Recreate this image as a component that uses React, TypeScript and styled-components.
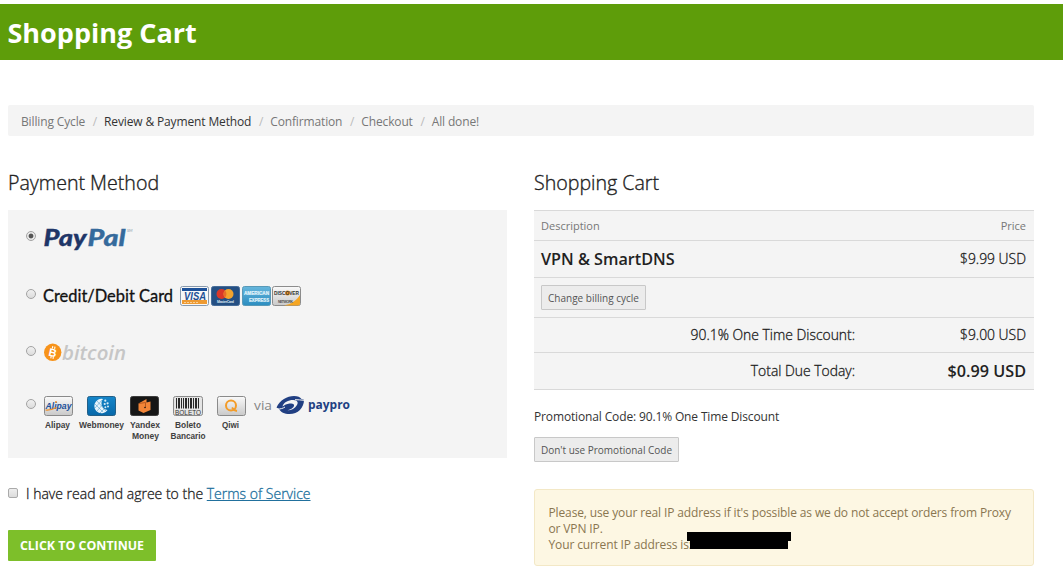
import React from "react";
import styled, { createGlobalStyle } from "styled-components";

const GlobalStyle = createGlobalStyle`
  * { box-sizing: border-box; }
  body {
    margin: 0;
    background: #fff;
    color: #222;
    font-family: "Open Sans", sans-serif;
    overflow: hidden;
  }
`;

const Page = styled.div`
  padding-top: 4px;
  height: 584px;
`;

const Header = styled.header`
  height: 56px;
  padding: 0 7.5px;
  background: #5e9d0a;
`;

const Title = styled.h1`
  margin: 0;
  color: #fff;
  font-size: 27px;
  font-weight: 700;
  line-height: 58px;
`;

const Content = styled.main`
  padding: 45px 29px 0 8px;
`;

const Breadcrumbs = styled.nav`
  display: flex;
  height: 31px;
  padding: 0 13px;
  border-radius: 2px;
  background: #f4f4f4;
  font-size: 12px;
  letter-spacing: -0.14px;
  line-height: 33px;
`;

const Crumb = styled.span<{ $active?: boolean }>`
  color: ${(p) => (p.$active ? "#333" : "#777")};

  &:not(:first-child)::before {
    content: "/";
    padding: 0 7px 0 7.7px;
    color: #bbb;
  }
`;

const Columns = styled.div`
  display: grid;
  grid-template-columns: 499px 500px;
  column-gap: 27px;
`;

const Column = styled.section`
  padding-top: 31px;
`;

const Heading = styled.h2`
  height: 43px;
  margin: 0;
  font-size: 19.6px;
  font-weight: 300;
  line-height: 32px;
  -webkit-text-stroke: 0.35px #222;
`;

const Methods = styled.div`
  display: flex;
  flex-direction: column;
  height: 248px;
  padding: 0 18px;
  background: #f4f4f4;
`;

const Method = styled.label<{ $height: number; $offset: number }>`
  display: flex;
  align-items: flex-start;
  gap: 8px;
  height: ${(p) => p.$height}px;
  padding-top: ${(p) => p.$offset}px;
`;

const Radio = styled.input<{ $top: number }>`
  appearance: none;
  flex: none;
  width: 10px;
  height: 10px;
  margin: ${(p) => p.$top}px 0 0;
  border: 1px solid #a3a3a3;
  border-radius: 50%;
  background: linear-gradient(#f0f0f0, #dcdcdc);

  &:checked {
    background: radial-gradient(circle, #555 0 2px, #e8e8e8 2.8px);
  }
`;

const Art = styled.svg`
  display: block;
  flex: none;
  overflow: visible;
`;

const Agreement = styled.label`
  display: flex;
  align-items: center;
  gap: 8px;
  height: 20px;
  margin-top: 25px;
  font-size: 14px;
  font-weight: 300;
  -webkit-text-stroke: 0.3px;
`;

const Checkbox = styled.input`
  appearance: none;
  width: 10px;
  height: 10px;
  margin: 0 0 1px;
  border: 1px solid #aaa;
  border-radius: 2px;
  background: linear-gradient(#eee, #dcdcdc);
`;

const TermsLink = styled.a`
  color: #21709d;
  text-decoration: underline;
`;

const Continue = styled.button`
  display: block;
  width: 148px;
  height: 31px;
  margin-top: 27px;
  padding: 0;
  border: 0;
  border-radius: 1px;
  background: #7dbf2a;
  color: #fff;
  font: 700 12.4px/31px "Open Sans", sans-serif;
  white-space: nowrap;
`;

const Cart = styled.div`
  border-top: 1px solid #d9d9d9;
  background: #f4f4f4;
`;

const CartRow = styled.div<{ $height: number }>`
  display: grid;
  grid-template-columns: 321px 1fr;
  align-items: center;
  height: ${(p) => p.$height}px;
  padding: 0 8px 0 7px;
  border-bottom: 1px solid #d9d9d9;
`;

const Cell = styled.span<{ $small?: boolean; $strong?: boolean }>`
  color: ${(p) => (p.$small ? "#777" : "#222")};
  font-size: ${(p) => (p.$small ? 11 : p.$strong ? 16.2 : 13.9)}px;
  font-weight: ${(p) => (p.$strong ? 600 : p.$small ? 400 : 300)};
  line-height: 20px;
  white-space: nowrap;
  ${(p) => (p.$small || p.$strong ? "" : "-webkit-text-stroke: 0.3px;")}
`;

const LabelCell = styled(Cell)`
  padding-right: 7px;
  text-align: right;
`;

const PriceCell = styled(Cell)`
  text-align: right;
`;

const SmallButton = styled.button<{ $width: number }>`
  display: block;
  width: ${(p) => p.$width}px;
  height: 25px;
  padding: 2px 0 0;
  border: 1px solid #c8c8c8;
  border-radius: 1px;
  background: #ececec;
  color: #555;
  font: 400 10px/21px "Open Sans", sans-serif;
  white-space: nowrap;
`;

const Promo = styled.p`
  margin: 17px 0 10px;
  color: #333;
  font-size: 12px;
  letter-spacing: -0.14px;
  line-height: 20px;
`;

const Notice = styled.div`
  height: 77px;
  margin-top: 27px;
  padding: 15px 13.5px;
  border: 1px solid #f3e8c6;
  border-radius: 3px;
  background: #fdf7e3;
  color: #8a7650;
  font-size: 12px;
  letter-spacing: -0.13px;
  line-height: 16px;
`;

const AddressLine = styled.div`
  position: relative;
`;

const Redaction = styled(Art)`
  position: absolute;
  left: 138.5px;
  top: -5px;
`;

const SANS = "Liberation Sans, sans-serif";

function PayPalLogo() {
  return (
    <Art width="90" height="26" fontFamily="Lato, sans-serif" fontSize="22.5" fontWeight="900" fontStyle="italic" strokeWidth="0.3">
      <text x="-0.5" y="17.5" fill="#1f3668" stroke="#1f3668" textLength="43" lengthAdjust="spacingAndGlyphs">Pay</text>
      <text x="43.5" y="17.5" fill="#356a9c" stroke="#356a9c" textLength="38" lengthAdjust="spacingAndGlyphs">Pal</text>
      <text x="83" y="4" fill="#8899aa" fontSize="4" fontWeight="400">SM</text>
    </Art>
  );
}

function CardLogos() {
  return (
    <Art width="258" height="22">
      <defs>
        <linearGradient id="silver" x1="0" y1="0" x2="0" y2="1">
          <stop offset="0" stopColor="#fafafa" />
          <stop offset="1" stopColor="#c9c9c9" />
        </linearGradient>
        <linearGradient id="amex" x1="0" y1="0" x2="0" y2="1">
          <stop offset="0" stopColor="#66b6dc" />
          <stop offset="1" stopColor="#2b8dc0" />
        </linearGradient>
      </defs>
      <text x="-1" y="16.5" fill="#111" fontFamily="Lato, sans-serif" fontSize="16.5" fontWeight="400" stroke="#111" strokeWidth="0.3" textLength="130" lengthAdjust="spacingAndGlyphs">Credit/Debit Card</text>

      <g transform="translate(136 1)">
        <rect x="0.5" y="0.5" width="28" height="19" rx="2" fill="#f7f7f7" stroke="#8799ad" />
        <path d="M2 2h25v3H2z" fill="#1d5199" />
        <path d="M2 14h25v4H2z" fill="#ee9a32" />
        <text x="4" y="13.5" fill="#1d4f95" fontFamily={SANS} fontSize="10" fontWeight="700" fontStyle="italic" textLength="22" lengthAdjust="spacingAndGlyphs">VISA</text>
        <path d="M4 16.5h15" stroke="#fff4dc" strokeDasharray="2 1" opacity="0.6" />
      </g>
      <g transform="translate(167 1)">
        <rect x="0.5" y="0.5" width="28" height="19" rx="2" fill="#244f83" stroke="#456b98" />
        <circle cx="10.5" cy="8" r="5" fill="#d83729" />
        <circle cx="17.5" cy="8" r="5" fill="#f3a32e" />
        <path d="M14 4.5a5 5 0 0 1 0 7a5 5 0 0 1 0-7z" fill="#e76c29" />
        <text x="6" y="17" fill="#dce7f3" fontFamily={SANS} fontSize="3.5" fontWeight="700" textLength="17">MasterCard</text>
      </g>
      <g transform="translate(198 1)">
        <rect x="0.5" y="0.5" width="28" height="19" rx="2" fill="url(#amex)" stroke="#5899b7" />
        <g fill="#e2f4fb" stroke="#e2f4fb" strokeWidth="0.2" fontFamily={SANS} fontSize="4.8" fontWeight="700">
          <text x="2" y="8.5" textLength="25" lengthAdjust="spacingAndGlyphs">AMERICAN</text>
          <text x="7" y="15.5" textLength="20" lengthAdjust="spacingAndGlyphs">EXPRESS</text>
        </g>
      </g>
      <g transform="translate(228 1)">
        <rect x="0.5" y="0.5" width="28" height="19" rx="2" fill="url(#silver)" stroke="#8c8c8c" />
        <path d="M28 9v8.5a2 2 0 0 1-2 2H12C20 18 25 14 28 9z" fill="#f5a623" />
        <circle cx="15.5" cy="7" r="2.5" fill="#ef9422" />
        <text x="2" y="9" fill="#333" fontFamily={SANS} fontSize="5" fontWeight="700" textLength="25" lengthAdjust="spacingAndGlyphs">DISCOVER</text>
        <text x="6" y="16.5" fill="#555" fontFamily={SANS} fontSize="3.5" fontWeight="700" textLength="15">NETWORK</text>
      </g>
    </Art>
  );
}

function BitcoinLogo() {
  return (
    <Art width="84" height="22">
      <circle cx="8.7" cy="9.3" r="8.7" fill="#f7931a" />
      <text x="4.9" y="13.4" fill="#fff" fontFamily={SANS} fontSize="11" fontWeight="700" transform="rotate(13 8.7 9.3)">B</text>
      <path d="M8.8 3.2l-.4 2.2M11 3.6l-.4 2.2M7.2 13l-.4 2.3M9.4 13.5l-.4 2.3" stroke="#fff" strokeWidth="1.1" />
      <text x="18" y="17" fill="#c6c6c6" fontFamily="Open Sans, sans-serif" fontSize="20.5" fontWeight="600" fontStyle="italic" textLength="64" lengthAdjust="spacingAndGlyphs">bitcoin</text>
    </Art>
  );
}

const BARS: Array<[number, number]> = [
  [3, 1], [5, 2], [8, 1], [10, 1], [12, 2], [15, 1], [17, 2], [20, 1], [22, 2], [25, 1],
];

function OtherLogos() {
  return (
    <Art width="308" height="46">
      <defs>
        <linearGradient id="webmoney" x1="0" y1="0" x2="0" y2="1">
          <stop offset="0" stopColor="#1586ca" />
          <stop offset="1" stopColor="#0768a9" />
        </linearGradient>
      </defs>

      <rect x="0.5" y="0.5" width="28" height="19" rx="2" fill="url(#silver)" stroke="#8a8a8a" />
      <text x="1.5" y="13" fill="#22509a" fontFamily={SANS} fontSize="9.5" fontWeight="700" fontStyle="italic" textLength="26" lengthAdjust="spacingAndGlyphs">Alipay</text>
      <path d="M1.5 14c4 .5 8-1 11-2.5" fill="none" stroke="#ef8b20" strokeWidth="1.2" />
      <circle cx="12" cy="6" r="0.9" fill="#ef8b20" />

      <g transform="translate(43 0)">
        <rect x="0.5" y="0.5" width="28" height="19" rx="2" fill="url(#webmoney)" stroke="#235f87" />
        <path d="M16 3A7.2 7.2 0 1 0 20.5 14A6.8 6.8 0 0 1 16 3z" fill="#e8f4fb" />
        <path d="M8 8l8 8M10 5l9 10M8 12l7-8M10 15l6-7M13 17l5-5" stroke="#1579b9" strokeWidth="0.4" />
        <g fill="#d5eaf6">
          <circle cx="18.3" cy="4.7" r="1.1" />
          <circle cx="20.6" cy="7.3" r="1.1" />
          <circle cx="17.7" cy="8" r="1.1" />
          <circle cx="21" cy="10.5" r="1" />
          <circle cx="18.4" cy="11.2" r="1" />
        </g>
      </g>

      <g transform="translate(86 0)">
        <rect x="0.5" y="0.5" width="28" height="19" rx="2" fill="#161616" stroke="#3c3c3c" />
        <path d="M8.5 7.5l8-4.5v3.5l4-1v8.5l-7 3-5-2.5z" fill="#f28538" />
        <path d="M9 7.5l6.5-1v5" fill="none" stroke="#a94c17" strokeWidth="0.8" />
        <circle cx="15" cy="11.5" r="0.8" fill="#161616" />
      </g>

      <g transform="translate(129 0)">
        <rect x="0.5" y="0.5" width="29" height="19" rx="2" fill="#e4e4e4" stroke="#8a8a8a" />
        {BARS.map(([x, width]) => (
          <rect key={x} x={x} y="2" width={width} height="10.5" fill="#292929" />
        ))}
        <text x="2" y="18.5" fill="#333" fontFamily={SANS} fontSize="7" textLength="26" lengthAdjust="spacingAndGlyphs">BOLETO</text>
      </g>

      <g transform="translate(173 0)">
        <rect x="0.5" y="0.5" width="28" height="19" rx="2" fill="url(#silver)" stroke="#8a8a8a" />
        <circle cx="14" cy="9.5" r="5" fill="none" stroke="#f39c28" strokeWidth="2" />
        <path d="M15 11.5c1 2 2.5 3 5 3.5" fill="none" stroke="#f39c28" strokeWidth="1.8" />
      </g>

      <g fill="#404040" fontFamily={SANS} fontSize="9.5" fontWeight="700">
        <text x="1" y="32" textLength="25" lengthAdjust="spacingAndGlyphs">Alipay</text>
        <text x="35" y="32" textLength="45" lengthAdjust="spacingAndGlyphs">Webmoney</text>
        <text x="86" y="32" textLength="30" lengthAdjust="spacingAndGlyphs">Yandex</text>
        <text x="88" y="43" textLength="27" lengthAdjust="spacingAndGlyphs">Money</text>
        <text x="131" y="32" textLength="26" lengthAdjust="spacingAndGlyphs">Boleto</text>
        <text x="126.5" y="43" textLength="35" lengthAdjust="spacingAndGlyphs">Bancario</text>
        <text x="178" y="32" textLength="17" lengthAdjust="spacingAndGlyphs">Qiwi</text>
      </g>

      <text x="210" y="14" fill="#858585" fontFamily="Open Sans, sans-serif" fontSize="13" textLength="18" lengthAdjust="spacingAndGlyphs">via</text>
      <path d="M232.5 11.5C236 4 243 0 250 0c4 0 6 1 7.500 3l2.500 .7c0 8-6 14.300-14.500 14.300-5 0-9-2-10.500-5z" fill="#213f82" />
      <path d="M238.500 10.500C239.500 6 245 3.800 249.500 4c4 .2 5 2.500 3.500 5-2 3.500-6 5.500-9.500 5.300 3.500-.8 6-2.500 6.500-4.300.6-2-1.500-3-4.500-2.400-2.700.5-5 1.500-7 2.900z" fill="#f4f4f4" />
      <path d="M251 3.700c3 0 6 .3 9 .6M233 13c3 .3 6-.6 8-2" fill="none" stroke="#f4f4f4" strokeWidth="1" />
      <text x="264" y="13" fill="#213f82" fontFamily="Open Sans, sans-serif" fontSize="13" fontWeight="700" textLength="42" lengthAdjust="spacingAndGlyphs">paypro</text>
    </Art>
  );
}

export default function App() {
  return (
    <Page>
      <GlobalStyle />
      <Header>
        <Title>Shopping Cart</Title>
      </Header>
      <Content>
        <Breadcrumbs>
          <Crumb>Billing Cycle</Crumb>
          <Crumb $active>Review &amp; Payment Method</Crumb>
          <Crumb>Confirmation</Crumb>
          <Crumb>Checkout</Crumb>
          <Crumb>All done!</Crumb>
        </Breadcrumbs>
        <Columns>
          <Column>
            <Heading>Payment Method</Heading>
            <Methods>
              <Method $height={75} $offset={18}>
                <Radio type="radio" name="method" defaultChecked $top={3} />
                <PayPalLogo />
              </Method>
              <Method $height={58} $offset={0}>
                <Radio type="radio" name="method" $top={4} />
                <CardLogos />
              </Method>
              <Method $height={53} $offset={0}>
                <Radio type="radio" name="method" $top={3} />
                <BitcoinLogo />
              </Method>
              <Method $height={60} $offset={0}>
                <Radio type="radio" name="method" $top={3} />
                <OtherLogos />
              </Method>
            </Methods>
            <Agreement>
              <Checkbox type="checkbox" />
              <span>
                I have read and agree to the <TermsLink>Terms of Service</TermsLink>
              </span>
            </Agreement>
            <Continue>CLICK TO CONTINUE</Continue>
          </Column>
          <Column>
            <Heading>Shopping Cart</Heading>
            <Cart>
              <CartRow $height={30}>
                <Cell $small>Description</Cell>
                <PriceCell $small>Price</PriceCell>
              </CartRow>
              <CartRow $height={37}>
                <Cell $strong>VPN &amp; SmartDNS</Cell>
                <PriceCell>$9.99 USD</PriceCell>
              </CartRow>
              <CartRow $height={40}>
                <SmallButton $width={105}>Change billing cycle</SmallButton>
              </CartRow>
              <CartRow $height={35}>
                <LabelCell>90.1% One Time Discount:</LabelCell>
                <PriceCell>$9.00 USD</PriceCell>
              </CartRow>
              <CartRow $height={37}>
                <LabelCell>Total Due Today:</LabelCell>
                <PriceCell $strong>$0.99 USD</PriceCell>
              </CartRow>
            </Cart>
            <Promo>Promotional Code: 90.1% One Time Discount</Promo>
            <SmallButton $width={145}>Don't use Promotional Code</SmallButton>
            <Notice>
              Please, use your real IP address if it's possible as we do not accept orders from Proxy or VPN IP.
              <AddressLine>
                Your current IP address is:
                <Redaction width="104" height="17">
                  <path d="M0 0h104v9h-3v8H3V9H0z" fill="#000" />
                </Redaction>
              </AddressLine>
            </Notice>
          </Column>
        </Columns>
      </Content>
    </Page>
  );
}
